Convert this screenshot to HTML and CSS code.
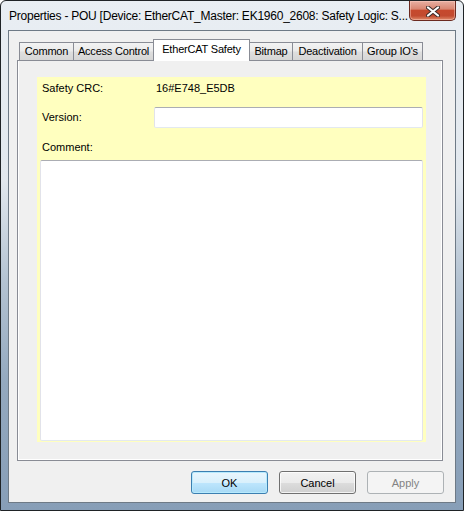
FILE: index.html
```html
<!DOCTYPE html>
<html lang="en">
<head>
	<meta charset="UTF-8">
	<title>Properties - POU</title>
	<link rel="stylesheet" href="styles.css">
</head>
<body>

	<div class="window">
		<div class="title-bar">
			<div class="title-text">Properties - POU [Device: EtherCAT_Master: EK1960_2608: Safety Logic: S...</div>
			<div class="close-btn">
				<svg width="14" height="11" viewBox="0 0 14 11">
					<path d="M2 1.5 L12 9.5 M12 1.5 L2 9.5" stroke="#3a2a28" stroke-width="4" stroke-linecap="round" fill="none"/>
					<path d="M2 1.5 L12 9.5 M12 1.5 L2 9.5" stroke="#fff" stroke-width="2.2" stroke-linecap="round" fill="none"/>
				</svg>
			</div>
		</div>

		<div class="client">
			<div class="tab-row">
				<div class="tab-gap"></div>
				<div class="tab tab-common">Common</div>
				<div class="tab tab-access">Access Control</div>
				<div class="tab tab-safety actived">EtherCAT Safety</div>
				<div class="tab tab-bitmap">Bitmap</div>
				<div class="tab tab-deact">Deactivation</div>
				<div class="tab tab-group">Group IO's</div>
				<div class="tab-fill"></div>
			</div>

			<div class="tab-page">
				<div class="safety-box">
					<div class="field-row row-crc">
						<div class="field-label">Safety CRC:</div>
						<div class="field-value">16#E748_E5DB</div>
					</div>
					<div class="field-row row-version">
						<div class="field-label">Version:</div>
						<input class="text-input" type="text" value="">
					</div>
					<div class="field-row row-comment">
						<div class="field-label">Comment:</div>
					</div>
					<textarea class="comment-box"></textarea>
				</div>
			</div>

			<div class="button-row">
				<button class="btn btn-default">OK</button>
				<button class="btn">Cancel</button>
				<button class="btn btn-disabled">Apply</button>
			</div>
		</div>
	</div>

</body>
</html>
```

FILE: styles.css
```css
*{
	margin: 0;
	padding: 0;
	box-sizing: border-box;
}
body{
	width: 464px;
	height: 511px;
	overflow: hidden;
	background: #fff;
	font-family: "Liberation Sans", Arial, sans-serif;
	font-size: 11px;
	color: #000;
}
.window{
	width: 464px;
	height: 511px;
	border: 1px solid #1f2326;
	border-radius: 6px 6px 0 0;
	padding: 0 7px 7px 7px;
	display: flex;
	flex-direction: column;
	background: linear-gradient(to bottom, #e9eef3 0%, #e2e8ee 35%, #b4c3d2 55%, #94a9bf 75%, #879eb7 100%);
}
.title-bar{
	height: 29px;
	display: flex;
	align-items: flex-start;
}
.title-text{
	flex: 1;
	min-width: 0;
	padding: 8px 0 0 1px;
	font-size: 12px;
	line-height: 14px;
	letter-spacing: -0.24px;
	white-space: nowrap;
}
.close-btn{
	width: 47px;
	height: 20px;
	border: 1px solid #6b2a20;
	border-top: 0;
	border-radius: 0 0 5px 5px;
	display: flex;
	align-items: center;
	justify-content: center;
	background: linear-gradient(to bottom, #e8b0a3 0%, #d98672 42%, #c6492d 50%, #c24a2f 78%, #df8a6a 100%);
	box-shadow: inset 0 0 0 1px rgba(255,210,200,.45);
}
.close-btn svg{
	display: block;
	margin-top: 1px;
}
.client{
	flex: 1;
	border: 1px solid #6e7a86;
	background-color: #f0f0f0;
	padding: 8px 12px 8px 8px;
	display: flex;
	flex-direction: column;
}

/* tabs */
.tab-row{
	height: 22px;
	display: flex;
	align-items: flex-end;
}
.tab-gap{
	width: 2px;
	height: 1px;
	border-bottom: 1px solid #898c95;
}
.tab-fill{
	flex: 1;
	height: 1px;
	border-bottom: 1px solid #898c95;
}
.tab{
	height: 19px;
	line-height: 17px;
	text-align: center;
	white-space: nowrap;
	letter-spacing: -0.2px;
	border: 1px solid #898c95;
	margin-right: -1px;
	background: linear-gradient(to bottom, #f3f3f3 0%, #ebebeb 45%, #dedede 55%, #d6d6d6 100%);
}
.tab.actived{
	height: 22px;
	line-height: 18px;
	border-bottom: 0;
	background: #fff;
	position: relative;
	z-index: 1;
}
.tab-common{ width: 55px; }
.tab-access{ width: 81px; }
.tab-safety{ width: 97px; }
.tab-bitmap{ width: 44px; }
.tab-deact{ width: 71px; }
.tab-group{ width: 61px; }

.tab-page{
	flex: 1;
	border: 1px solid #898c95;
	border-top: 0;
	background-color: #f0f0f0;
	padding: 16px 16px 18px 19px;
	display: flex;
	box-shadow: inset 1px 0 0 #fff, inset -1px -1px 0 #fff;
}
.safety-box{
	flex: 1;
	background-color: #ffffbf;
	padding: 0 3px 1px 3px;
	display: flex;
	flex-direction: column;
}
.field-row{
	display: flex;
	height: 21px;
	line-height: 21px;
}
.row-crc{
	height: 22px;
	padding-top: 1px;
}
.row-version{
	margin-top: 8px;
}
.row-comment{
	margin-top: 9px;
}
.field-label{
	width: 114px;
	padding-left: 2px;
}
.field-value{
	padding-left: 2px;
}
.text-input{
	flex: 1;
	height: 21px;
	border: 1px solid #e2e3ea;
	border-top-color: #abadb3;
	border-bottom-color: #e3e9ef;
	border-radius: 2px;
	background: #fff;
	outline: none;
	font-family: "Liberation Sans", Arial, sans-serif;
	font-size: 11px;
}
.comment-box{
	flex: 1;
	margin-top: 2px;
	resize: none;
	border: 1px solid #e2e3ea;
	border-top-color: #abadb3;
	border-bottom-color: #e3e9ef;
	border-radius: 2px;
	background: #fff;
	outline: none;
	font-family: "Liberation Sans", Arial, sans-serif;
	font-size: 11px;
}

/* buttons */
.button-row{
	margin-top: 10px;
	margin-right: -1px;
	display: flex;
	justify-content: flex-end;
	gap: 11px;
}
.btn{
	width: 77px;
	height: 23px;
	border: 1px solid #707070;
	border-radius: 3px;
	font-family: "Liberation Sans", Arial, sans-serif;
	font-size: 11px;
	color: #000;
	background: linear-gradient(to bottom, #f2f2f2 0%, #ebebeb 50%, #dddddd 51%, #cfcfcf 100%);
	box-shadow: inset 0 0 0 1px rgba(255,255,255,.75);
}
.btn-default{
	border-color: #3c7fb1;
	background: linear-gradient(to bottom, #eaf6fd 0%, #d9f0fc 50%, #bee6fd 51%, #a7d9f5 100%);
	box-shadow: inset 0 0 0 1px #b7eafd;
}
.btn-disabled{
	border-color: #adb2b5;
	background: #f4f4f4;
	color: #838383;
	box-shadow: none;
}
```
